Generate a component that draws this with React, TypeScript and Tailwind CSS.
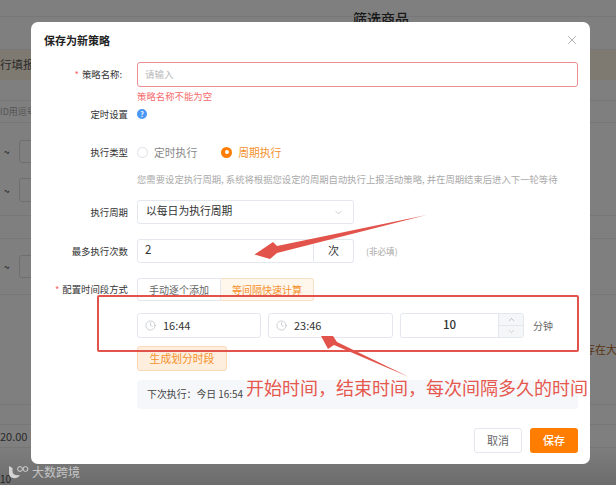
import React from "react";
import { ChevronDown, ChevronUp, Clock, X } from "lucide-react";

const Label = ({ text, required, trailing }: { text: string; required?: boolean; trailing?: boolean }) => (
  <div className={`w-[84px] mr-[9px] shrink-0 text-right text-[9.4px] text-[#333] ${trailing ? "pr-[6px]" : ""}`}>
    {required && <span className="text-[#f56c6c] mr-[3px]">*</span>}
    {text}
  </div>
);

const TimeInput = ({ value, width }: { value: string; width: string }) => (
  <div className={`${width} h-[25px] flex items-center border border-[#e4e7ed] rounded-[3px] pl-[7px] pb-[1px]`}>
    <Clock size={11} strokeWidth={1.3} className="text-[#aeb1b7]" />
    <span className="ml-[7px] text-[11px] text-[#333]">{value}</span>
  </div>
);

const Background = () => (
  <div className="w-[616px] h-[485px] overflow-hidden bg-white text-[#333]">
    <div className="h-[50px] border-b border-[#eee] relative">
      <div className="absolute left-[353px] top-[8px] text-[14px] font-medium">筛选商品</div>
      <div className="h-[17px] border-b border-[#eee]" />
    </div>
    <div className="h-[30px] bg-[#fdf3e2] flex items-center text-[11.5px] text-[#555]">行填报</div>
    <div className="h-[20px]" />
    <div className="h-[23px] border-y border-[#eee] flex items-center text-[9px] text-[#aaa] whitespace-nowrap">ID用逗号</div>
    <div className="h-[93px] border-b border-[#eee] flex flex-col pl-[4px] pt-[17px]">
      <div className="flex items-center gap-[9px] h-[23px]">
        <span className="text-[10px]">~</span>
        <div className="w-[20px] h-[23px] border border-[#ddd] rounded-[3px]" />
      </div>
      <div className="flex items-center gap-[9px] h-[24px] mt-[15px]">
        <span className="text-[10px]">~</span>
        <div className="w-[20px] h-[24px] border border-[#ddd] rounded-[3px]" />
      </div>
    </div>
    <div className="h-[23px] border-b border-[#eee]" />
    <div className="h-[56px] border-b border-[#eee] flex items-center pl-[4px] gap-[9px]">
      <span className="text-[10px]">~</span>
      <div className="w-[20px] h-[23px] border border-[#ddd] rounded-[3px]" />
    </div>
    <div className="h-[110px] border-b border-[#eee] relative">
      <div className="absolute right-[-1px] top-[46px] text-[11px] text-[#b36a1e] whitespace-nowrap">存在大</div>
    </div>
    <div className="h-[20px] border-b border-[#eee]" />
    <div className="h-[23px] border-b border-[#eee] flex items-center text-[11px] text-[#555]">20.00</div>
    <div className="pt-[25px] text-[10px] leading-[12px] text-[#555]">10</div>
  </div>
);

export default function App() {
  return (
    <div className="relative w-[616px] h-[485px] overflow-hidden font-['Noto_Sans_CJK_SC','Noto_Sans',sans-serif]">
      <Background />

      {/* mask + dialog */}
      <div className="absolute inset-0 bg-black/50 pl-[31px] pt-[22px]">
        <div className="absolute left-0 right-0 bottom-0 h-[40px] bg-linear-to-b from-transparent to-black/15" />
        <div className="relative w-[559px] h-[442px] bg-white rounded-[7px] pl-[13px] pr-[12px] flex flex-col">
          <div className="h-[36px] mb-[4px] flex items-center justify-between">
            <span className="text-[11px] font-bold text-[#222]">保存为新策略</span>
            <X size={14} strokeWidth={1} className="text-[#777] -mr-[1px]" />
          </div>

          <div className="h-[25px] flex items-center">
            <Label text="策略名称:" required trailing />
            <div className="flex-1 h-full flex items-center px-[7px] border border-[#e88f92] rounded-[3px] text-[9.5px] text-[#bbb]">
              请输入
            </div>
          </div>
          <div className="h-[18px] flex items-center pl-[93px] text-[9.4px] text-[#f56c6c]">策略名称不能为空</div>

          <div className="h-[18px] flex items-center">
            <Label text="定时设置" />
            <span className="w-[10px] h-[10px] rounded-full bg-[#4a98f5] text-white text-[7px] font-bold flex items-center justify-center">?</span>
          </div>

          <div className="h-[18px] mt-[20px] flex items-center">
            <Label text="执行类型" />
            <span className="w-[11px] h-[11px] rounded-full border border-[#dcdfe6]" />
            <span className="ml-[6px] text-[10.8px] text-[#888]">定时执行</span>
            <span className="ml-[24px] w-[11px] h-[11px] rounded-full bg-[#ff7d00] flex items-center justify-center">
              <span className="w-[4px] h-[4px] rounded-full bg-white" />
            </span>
            <span className="ml-[6px] text-[10.8px] text-[#f5912c]">周期执行</span>
          </div>

          <div className="h-[18px] mt-[9px] flex items-center pl-[93px] text-[9.35px] text-[#aaa] whitespace-nowrap">
            您需要设定执行周期, 系统将根据您设定的周期自动执行上报活动策略, 并在周期结束后进入下一轮等待
          </div>

          <div className="h-[24px] mt-[12px] flex items-center">
            <Label text="执行周期" />
            <div className="w-[217px] h-full flex items-center justify-between pl-[8px] pr-[9px] pb-[3px] border border-[#e4e7ed] rounded-[3px] text-[10.8px] text-[#333]">
              以每日为执行周期
              <ChevronDown size={11} strokeWidth={1} className="text-[#999] mt-[3px]" />
            </div>
          </div>

          <div className="h-[24px] mt-[15px] flex items-center">
            <Label text="最多执行次数" />
            <div className="w-[177px] h-full flex items-center px-[7px] pb-[2px] border border-[#e4e7ed] rounded-l-[3px] text-[11.5px] text-[#333]">2</div>
            <div className="w-[40px] h-full flex items-center justify-center pb-[2px] border border-l-0 border-[#e4e7ed] rounded-r-[3px] text-[11px] text-[#333]">次</div>
            <span className="ml-[12px] text-[8.6px] text-[#aaa]">(非必填)</span>
          </div>

          <div className="h-[23px] mt-[15px] flex items-center">
            <Label text="配置时间段方式" required />
            <div className="w-[84px] h-full flex items-center justify-center border border-[#e4e7ed] rounded-l-[3px] text-[10px] text-[#666]">手动逐个添加</div>
            <div className="w-[93px] h-full flex items-center justify-center border border-l-0 border-[#f8dfc5] bg-[#fff6ec] rounded-r-[3px] text-[10px] text-[#f5912c]">等间隔快速计算</div>
          </div>

          <div className="h-[25px] mt-[12px] pl-[93px] flex items-center">
            <TimeInput value="16:44" width="w-[124px]" />
            <div className="ml-[7px]">
              <TimeInput value="23:46" width="w-[125px]" />
            </div>
            <div className="ml-[7px] w-[124px] h-full flex border border-[#e4e7ed] rounded-[3px]">
              <div className="flex-1 flex items-center justify-center pb-[1px] text-[11.5px] font-medium text-[#333]">10</div>
              <div className="w-[25px] flex flex-col bg-[#f5f6f8] border-l border-[#e4e7ed] rounded-r-[3px]">
                <div className="flex-1 flex items-center justify-center border-b border-[#e4e7ed]">
                  <ChevronUp size={9} strokeWidth={1} className="text-[#666]" />
                </div>
                <div className="flex-1 flex items-center justify-center">
                  <ChevronDown size={9} strokeWidth={1} className="text-[#999]" />
                </div>
              </div>
            </div>
            <span className="ml-[9px] text-[10px] text-[#666]">分钟</span>
          </div>

          <div className="h-[25px] mt-[8px] pl-[93px]">
            <div className="w-[90px] h-full flex items-center justify-center bg-[#fdeedd] border border-[#fad9b8] rounded-[3px] text-[10.8px] text-[#f5912c]">生成划分时段</div>
          </div>

          <div className="h-[29px] mt-[9px] ml-[93px] flex items-center pl-[10px] bg-[#f5f7fa] rounded-[4px] text-[9.9px] text-[#444]">下次执行：今日 16:54</div>

          <div className="h-[25px] mt-[19px] flex justify-end gap-[8px]">
            <div className="w-[48px] h-full flex items-center justify-center border border-[#e4e7ed] rounded-[3px] text-[11px] text-[#666]">取消</div>
            <div className="w-[48px] h-full flex items-center justify-center bg-[#ff7d00] rounded-[3px] text-[11px] font-medium text-white">保存</div>
          </div>
        </div>
      </div>

      {/* screenshot annotations */}
      <div className="absolute left-[97px] top-[295px] w-[482px] h-[57px] border-[2.5px] border-[#e2544b] rounded-[2px]" />
      <svg className="absolute inset-0" width="616" height="485" viewBox="0 0 616 485">
        <polygon points="426.5,215 277,246 273,242 254.5,254.5 270,259 277,253" fill="#e2544b" />
        <polygon points="409,377 337,342 333,336 321,336 328,349 334,345" fill="#e2544b" />
      </svg>
      <div className="absolute left-[246px] top-[374px] text-[18px] leading-[26px] text-[#e6574e] whitespace-nowrap">
        开始时间，结束时间，每次间隔多久的时间
      </div>

      {/* watermark */}
      <div className="absolute left-[7px] top-[464px] flex items-center gap-[3px]">
        <svg width="22" height="16" viewBox="0 0 22 16" fill="none" stroke="#d4d4d4">
          <path d="M2 2 L2 9 C2 15 10 16 13 11 C9 12 5.5 11 5.5 7 L5.5 4 Z" fill="#d4d4d4" stroke="none" />
          <circle cx="13" cy="5" r="2.4" strokeWidth="1" />
          <circle cx="18.5" cy="5" r="2.4" strokeWidth="1" />
        </svg>
        <span className="text-[12px] text-[#c6c6c6] leading-[16px]">大数跨境</span>
      </div>
    </div>
  );
}
